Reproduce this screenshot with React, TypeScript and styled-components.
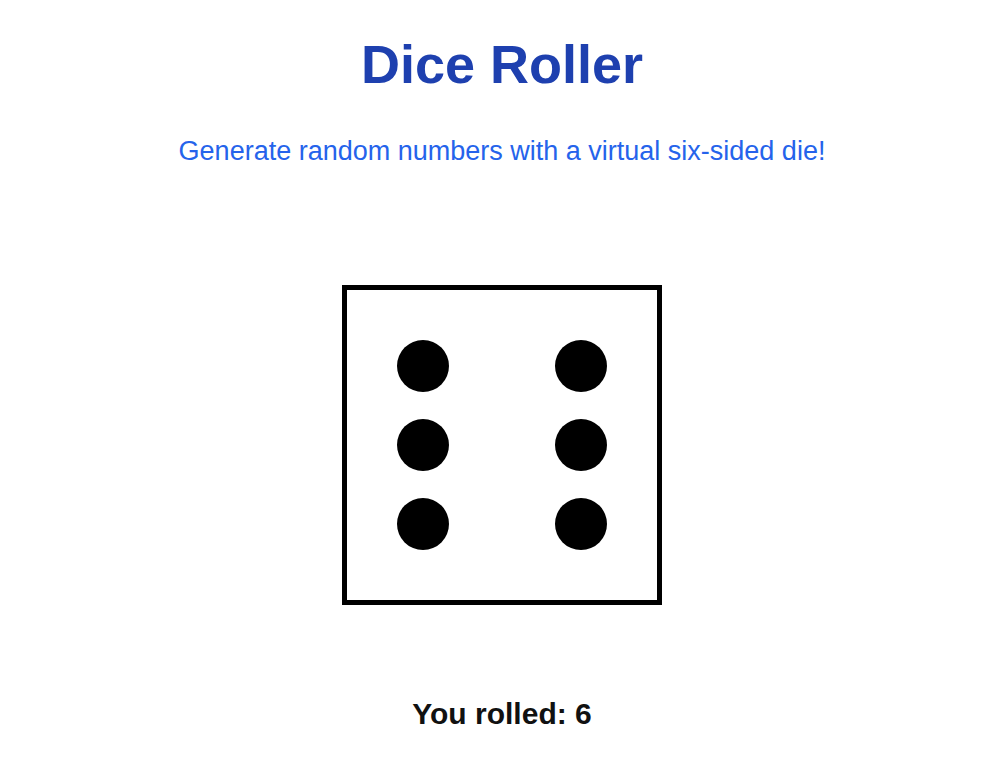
import React from 'react';
import styled, { createGlobalStyle } from 'styled-components';

const GlobalStyle = createGlobalStyle`
  html, body {
    margin: 0;
    padding: 0;
    background: #ffffff;
  }
  body {
    font-family: "Liberation Sans", Arial, sans-serif;
  }
`;

const Page = styled.main`
  display: flex;
  flex-direction: column;
  align-items: center;
  padding: 32px 0 0 16px;
`;

const Title = styled.h1`
  margin: 0;
  font-size: 54px;
  line-height: 64px;
  font-weight: 700;
  color: #1e40af;
`;

const Subtitle = styled.p`
  margin: 39px 0 0;
  font-size: 27px;
  line-height: 32px;
  color: #2563eb;
`;

const Die = styled.div`
  margin-top: 118px;
  width: 320px;
  height: 320px;
  box-sizing: border-box;
  border: 5px solid #000;
  background: #fff;
  padding: 50px;
  display: grid;
  grid-template-columns: 52px 52px;
  grid-template-rows: repeat(3, 52px);
  justify-content: space-between;
  align-content: space-between;
`;

const Pip = styled.span`
  width: 52px;
  height: 52px;
  border-radius: 50%;
  background: #000;
`;

const Result = styled.p`
  margin: 91px 0 0;
  font-size: 30px;
  line-height: 36px;
  font-weight: 700;
  color: #111111;
`;

const App: React.FC = () => {
  const value = 6;

  return (
    <>
      <GlobalStyle />
      <Page>
        <Title>Dice Roller</Title>
        <Subtitle>Generate random numbers with a virtual six-sided die!</Subtitle>
        <Die aria-label={`Die showing ${value}`}>
          {Array.from({ length: value }).map((_, i) => (
            <Pip key={i} />
          ))}
        </Die>
        <Result>You rolled: {value}</Result>
      </Page>
    </>
  );
};

export default App;
